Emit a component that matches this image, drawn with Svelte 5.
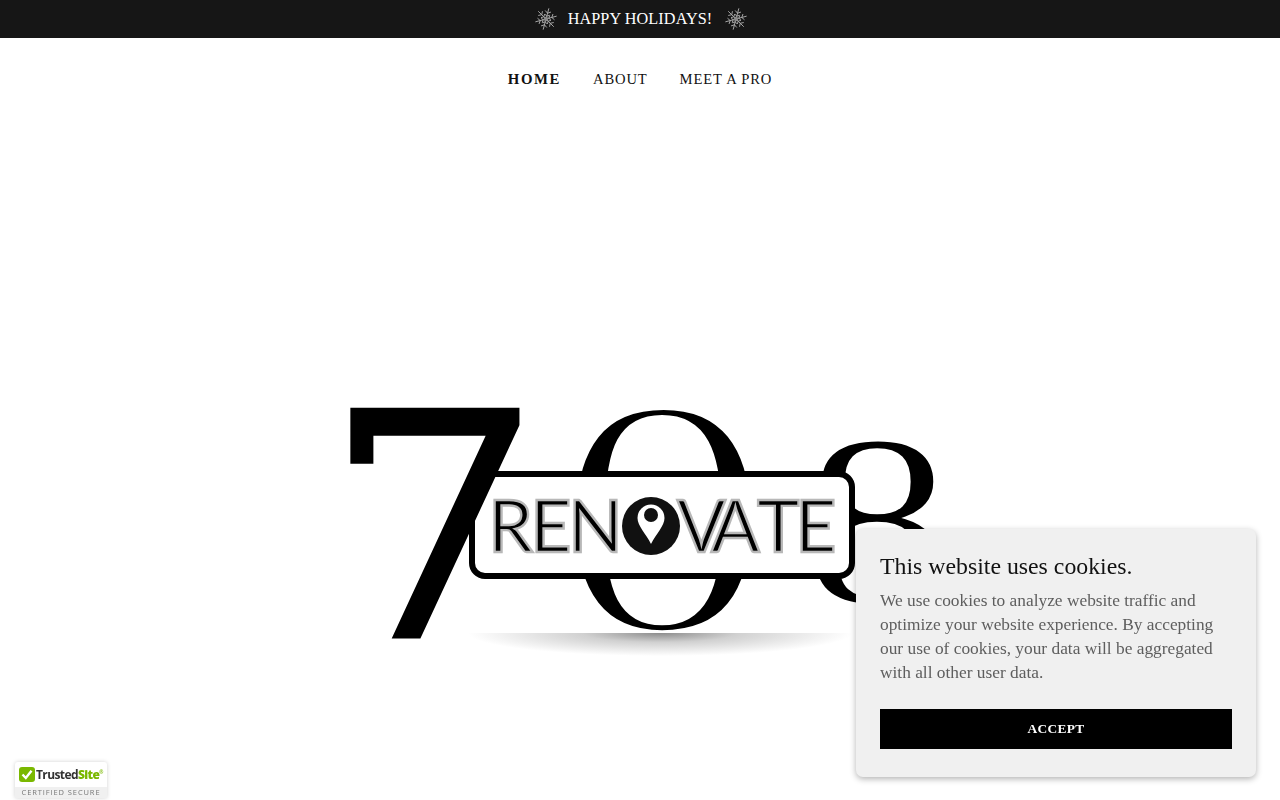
<script>
  const links = [
    { label: "HOME", active: true },
    { label: "ABOUT" },
    { label: "MEET A PRO" },
  ];
  const arms = [15, 75, 135, 195, 255, 315];
</script>

{#snippet flake()}
  <svg class="flake" viewBox="-12 -12 24 24" width="24" height="24" aria-hidden="true">
    {#each arms as a}
      <g transform={`rotate(${a})`}>
        <path d="M0 0V-11M-3-8 0-6 3-8M-2.5-4.5 0-3 2.5-4.5" />
      </g>
    {/each}
    <circle r="2.2" />
  </svg>
{/snippet}

<div class="banner">
  {@render flake()}
  <span>HAPPY HOLIDAYS!</span>
  {@render flake()}
</div>

<nav class="nav">
  {#each links as link}
    <a href="#top" class:active={link.active}>{link.label}</a>
  {/each}
</nav>

<main class="hero">
  <svg class="logo" viewBox="340 400 600 260" width="600" height="260" role="img" aria-label="708 Renovate">
    <defs>
      <radialGradient id="shade" gradientUnits="userSpaceOnUse" cx="0" cy="0" r="1" gradientTransform="translate(660 633) scale(192 23)">
        <stop offset="0" stop-color="#8c8c8c" />
        <stop offset="0.4" stop-color="#d0d0d0" />
        <stop offset="1" stop-color="#fff" />
      </radialGradient>
    </defs>
    <text class="zero" transform="translate(554.4 631) scale(1.32 1.026)">0</text>
    <rect x="468" y="633" width="384" height="24" fill="url(#shade)" />
    <text class="eight" transform="translate(803 603) scale(1.22 1)">8</text>
    <rect class="plate" x="472" y="474" width="380" height="102" rx="13" />
    <text class="seven" transform="translate(323 637) scale(1.1 0.995)">7</text>
    <text class="word" x="488 530 568" y="552">REN</text>
    <text class="word" x="677 711 757 795" y="552">VATE</text>
    <circle cx="651" cy="526" r="29" fill="#111" />
    <path d="M651 544 C646 534 637.5 526 637.5 518 A13.5 13.5 0 0 1 664.5 518 C664.5 526 656 534 651 544Z" fill="#fff" />
    <circle cx="651" cy="515" r="7" fill="#111" />
  </svg>
</main>

<aside class="badge">
  <div class="mark">
    <svg viewBox="0 0 16 15" width="16" height="15" aria-hidden="true">
      <rect width="16" height="15" rx="3" fill="#7ab800" />
      <path d="M3.5 7.5 6.8 11 12.5 3.8" fill="none" stroke="#fff" stroke-width="2.4" />
    </svg>
    <span class="trusted">Trusted<b>Site</b><sup>®</sup></span>
  </div>
  <div class="secure">CERTIFIED SECURE</div>
</aside>

<aside class="cookie">
  <h2>This website uses cookies.</h2>
  <p>We use cookies to analyze website traffic and optimize your website experience. By accepting our use of cookies, your data will be aggregated with all other user data.</p>
  <button>ACCEPT</button>
</aside>

<style>
  :global(body) {
    background: #fff;
    font-family: "Liberation Serif", serif;
    overflow: hidden;
  }
  .banner {
    height: 38px;
    padding-left: 2px;
    background: #161616;
    color: #fff;
    display: flex;
    align-items: center;
    justify-content: center;
    gap: 10px;
    font-size: 16.2px;
    letter-spacing: 0.1px;
  }
  .banner span {
    margin-right: 2px;
  }
  .flake {
    stroke: #a8a8a8;
    stroke-width: 0.9;
    fill: none;
  }
  .flake circle {
    fill: #888;
    stroke: none;
  }
  .nav {
    height: 82px;
    display: flex;
    align-items: center;
    justify-content: center;
    gap: 32px;
  }
  .nav a {
    color: #111;
    text-decoration: none;
    font-size: 14.6px;
    letter-spacing: 0.85px;
  }
  .nav a.active {
    font-weight: 700;
    font-size: 14.8px;
    letter-spacing: 1.6px;
  }
  .hero {
    display: flex;
    justify-content: center;
    padding-top: 280px;
  }
  .logo {
    display: block;
    overflow: visible;
  }
  .zero,
  .eight {
    font-family: "Liberation Serif", serif;
    stroke: #fff;
  }
  .zero {
    font-size: 330px;
    stroke-width: 8;
  }
  .eight {
    font-size: 245px;
    stroke-width: 3;
  }
  .seven {
    font-family: "DejaVu Serif", serif;
    font-size: 314px;
    stroke: #000;
    stroke-width: 3;
  }
  .plate {
    fill: #fff;
    stroke: #000;
    stroke-width: 6;
  }
  .word {
    font-family: Lato, sans-serif;
    font-size: 72px;
    fill: #000;
    stroke: #b8b8b8;
    stroke-width: 2.4;
    stroke-linejoin: miter;
    stroke-miterlimit: 8;
  }
  .badge {
    position: fixed;
    left: 15px;
    bottom: 2px;
    width: 92px;
    height: 36px;
    background: #fff;
    border-radius: 3px 3px 0 0;
    box-shadow: 0 0 4px rgba(0, 0, 0, 0.18);
    font-family: "Open Sans", sans-serif;
    overflow: hidden;
  }
  .mark {
    height: 25px;
    display: flex;
    align-items: center;
    gap: 1px;
    padding-left: 4px;
  }
  .trusted {
    font-size: 12px;
    font-weight: 700;
    letter-spacing: -0.6px;
    color: #333;
  }
  .trusted b {
    color: #7ab800;
  }
  .trusted sup {
    font-size: 5px;
    color: #7ab800;
  }
  .secure {
    background: #f0f0f0;
    height: 11px;
    line-height: 11px;
    font-size: 7.5px;
    letter-spacing: 0.9px;
    color: #777;
    text-align: center;
  }
  .cookie {
    position: fixed;
    left: 856px;
    top: 529px;
    width: 400px;
    height: 248px;
    box-sizing: border-box;
    padding: 21px 24px 28px;
    background: #f0f0f0;
    border-radius: 7px;
    box-shadow: 0 2px 6px 0 rgba(0, 0, 0, 0.3);
  }
  .cookie h2 {
    margin: 0 0 7px;
    font-size: 23.8px;
    line-height: 32px;
    font-weight: 400;
    color: #111;
  }
  .cookie p {
    margin: 0 0 24px;
    font-size: 17.35px;
    line-height: 24px;
    color: #5e5e5e;
  }
  .cookie button {
    display: block;
    width: 100%;
    height: 40px;
    border: 0;
    background: #000;
    color: #fff;
    font-family: inherit;
    font-size: 13.4px;
    font-weight: 700;
    letter-spacing: 0.3px;
  }
</style>
